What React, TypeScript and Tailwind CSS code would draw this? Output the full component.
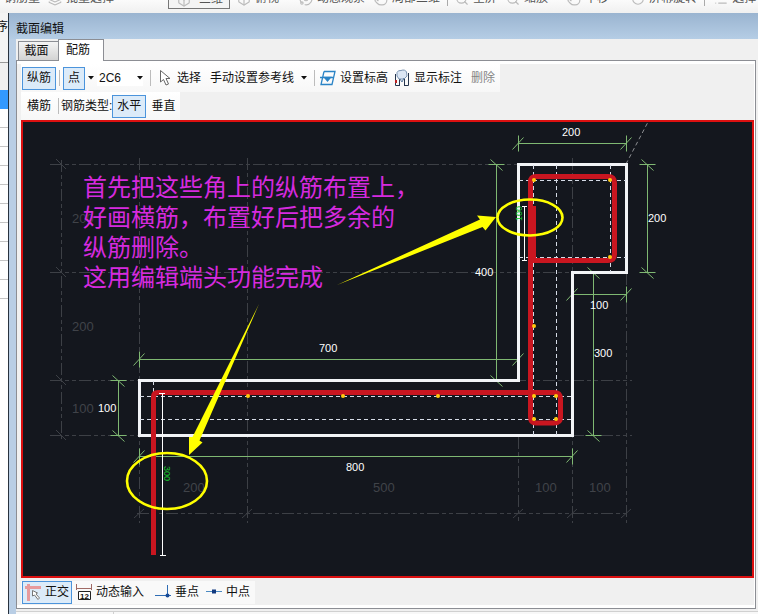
import { useState } from 'react';
import { Hand, Orbit, RotateCw, Search, Box, List, Layers } from 'lucide-react';

const topItems = [
  { text: '批量选择', icon: Layers, cls: 'ml-2' },
  { text: '俯视', icon: Box, cls: 'ml-[7px]', combo: true },
  { text: '动态观察', icon: Orbit, cls: 'ml-5' },
  { text: '局部三维', icon: Hand, cls: 'ml-[9px]' },
  { text: '全屏', icon: Search, cls: 'ml-[7px]', sep: true },
  { text: '缩放', icon: Search, cls: 'ml-[9px]' },
  { text: '平移', icon: Hand, cls: 'ml-[19px]' },
  { text: '屏幕旋转', icon: RotateCw, cls: 'ml-[22px]' },
  { text: '选择', icon: List, cls: 'ml-[9px]', sep: true },
];

const points = [
  [248, 396], [343, 396], [438, 396], [534, 326], [534, 180], [610, 180],
  [610, 257], [534, 396], [556, 396], [534, 419], [556, 419],
];

// [x1, x2, y]
const hDims = [[518.5, 626.5, 143.5], [572.5, 626.5, 294.5], [139.5, 518.5, 359.5], [139.5, 572.5, 456.5]];
// [x, y1, y2]
const vDims = [[496.5, 164.5, 380.5], [647.5, 164.5, 272.5], [593.5, 272.5, 435.5], [118.5, 380.5, 435.5]];

const labels: [number, number, string][] = [
  [562, 136, '200'], [648, 222, '200'], [475, 276, '400'], [590, 309, '100'],
  [594, 357, '300'], [319, 352, '700'], [346, 471, '800'], [98, 412, '100'],
];

const gridLabels: [number, number, string][] = [
  [72, 223, '200'], [72, 331, '200'], [72, 413, '100'], [183, 492, '200'],
  [373, 492, '500'], [535, 492, '100'], [589, 492, '100'],
];

const notes = ['首先把这些角上的纵筋布置上，', '好画横筋，布置好后把多余的', '纵筋删除。', '这用编辑端头功能完成'];

function Sep({ className = '' }) {
  return <span className={`h-4 w-px shrink-0 bg-[#bcbcbc] ${className}`} />;
}

function Caret() {
  return (
    <svg className="shrink-0" width="6" height="4" viewBox="0 0 6 4"><path d="M0 0h6L3 3.5z" fill="#111" /></svg>
  );
}

function ToolButton({ text, active = false, disabled = false, onClick, className = '', children }: any) {
  const state = active ? 'border-[#4b94dc] bg-[#dcebf9]' : 'border-transparent';
  return (
    <button
      disabled={disabled}
      onClick={onClick}
      className={`flex h-[23px] shrink-0 items-center gap-1 border whitespace-nowrap ${state} ${disabled ? 'text-[#858585]' : ''} ${className}`}
    >
      {children}
      {text}
    </button>
  );
}

function HDim({ x1, x2, y }: any) {
  return (
    <g>
      <path d={`M${x1} ${y}H${x2}`} />
      {[x1, x2].map(x => <path key={x} d={`M${x} ${y - 8}v16M${x - 6} ${y + 6}l11 -12`} />)}
    </g>
  );
}

function VDim({ x, y1, y2 }: any) {
  return (
    <g>
      <path d={`M${x} ${y1}V${y2}`} />
      {[y1, y2].map(y => <path key={y} d={`M${x - 8} ${y}h16M${x - 6} ${y - 5}l12 11`} />)}
    </g>
  );
}

function Drawing() {
  return (
    <svg className="block w-full" viewBox="23 122 729 454" fill="none">
      <g stroke="#3d4046" strokeDasharray="12 3 4 3 4 3">
        <path d="M50 164.5H518M50 272.5H572M50 380.5H632M50 435.5H632M137 513.5H628" />
        <path d="M61.5 160V439M139.5 158V523M247.5 158V523M518.5 437V523M572.5 158V523M626.5 273V523" />
      </g>
      <g stroke="#3d4046">
        {[164, 272, 380, 435].map(y => <path key={y} d={`M56 ${y - 5}l10 10M51 ${y + 0.5}h10`} />)}
        {[139, 247, 518, 572, 626].map(x => <path key={x} d={`M${x - 5} 518l10 -9`} />)}
      </g>
      <path d="M626 164L648 122" stroke="#8b8d91" strokeDasharray="4 3" />
      <g fill="#404349" className="font-[Liberation_Sans] text-[13px]">
        {gridLabels.map(([x, y, t]) => <text key={`${x}-${y}`} x={x} y={y}>{t}</text>)}
      </g>

      <g stroke="#7fb872">
        {hDims.map(([x1, x2, y]) => <HDim key={y} x1={x1} x2={x2} y={y} />)}
        {vDims.map(([x, y1, y2]) => <VDim key={x} x={x} y1={y1} y2={y2} />)}
      </g>

      <path d="M518.5 164.5H626.5V272.5H572.5V435.5H139.5V380.5H518.5Z" stroke="#f2f4f7" strokeWidth="3" />
      <path
        d="M140 396.5H572M140 419.5H572M519 180.5H626M519 257.5H626M153.5 381V396M533.5 165V435M556.5 165V435M610.5 165V272"
        stroke="#d5dbe6"
        strokeDasharray="4 3"
      />

      <g stroke="#c91620" strokeWidth="5">
        <path d="M153.5 555V397Q153.5 392.5 158 392.5H554Q560.5 392.5 560.5 399V417Q560.5 423 554 423H536Q530.5 423 530.5 417V182Q530.5 176.5 536 176.5H608Q614.5 176.5 614.5 183V254Q614.5 260.5 608 260.5H533" />
        <path d="M533.5 206V262" />
      </g>
      {points.map(([x, y]) => <circle key={`${x}-${y}`} cx={x} cy={y} r="2" fill="#ffc90e" />)}

      <path d="M162.5 393V555M159 393.5h6M160 555.5h6M524.5 206V260M522 206.5h5M522 260.5h5" stroke="#fff" />
      <g fill="#16c82c" className="font-[Liberation_Sans] text-[9px]">
        <text transform="translate(164 466) rotate(90)">300</text>
        <text transform="translate(522 221) rotate(-90)">100</text>
      </g>
      <g fill="#fff" className="font-[Liberation_Sans] text-[11px]">
        {labels.map(([x, y, t]) => <text key={`${x}-${y}`} x={x} y={y}>{t}</text>)}
      </g>

      <g stroke="#ffff00" strokeWidth="2.6">
        <ellipse cx="167" cy="481" rx="40" ry="28" />
        <ellipse cx="530" cy="217.5" rx="32.5" ry="18" />
      </g>
      <g fill="#ffff00">
        <path d="M337 285L480 219.5L477 215.5L496 217L485.5 230.5L482.5 227Z" />
        <path d="M259 304L192.5 437H189V455L202.5 442.5L199.5 440.5Z" />
      </g>
      <path d="M309 214l1-2 2 3z" fill="#d8a640" />
      <g fill="#d62adf" className="font-['Noto_Sans_CJK_SC',sans-serif] text-[24px] font-normal">
        {notes.map((t, i) => <text key={t} x="83" y={196 + i * 30}>{t}</text>)}
      </g>
    </svg>
  );
}

export default function App() {
  const [tab, setTab] = useState('配筋');
  const [bar, setBar] = useState('纵筋');
  const [dir, setDir] = useState('水平');
  const [ortho, setOrtho] = useState(true);

  return (
    <div className="flex min-h-screen flex-col overflow-hidden bg-[#f0f0f0] font-['Liberation_Sans','Noto_Sans_CJK_SC',sans-serif] text-xs text-[#111]">
      <header className="flex h-[13px] items-start overflow-hidden bg-linear-to-b from-[#fbfbfb] to-[#f0f0f0] text-[#555]">
        <button className="-mt-2 ml-1 shrink-0 leading-3">钢筋量</button>
        {topItems.map(({ text, icon: Icon, cls, combo, sep }) => (
          <div key={text + cls} className="contents">
            {combo && (
              <button className="-mt-3 ml-[54px] flex h-[21px] w-[62px] shrink-0 items-start gap-2 border border-[#777] bg-[#f4f4f4] pt-1 pl-2 leading-3">
                <Box size={14} className="text-[#bbb]" />三维
              </button>
            )}
            {sep && <span className="ml-[7px] h-1.5 w-px shrink-0 bg-[#aaa]" />}
            <button className={`-mt-2 flex shrink-0 items-start gap-1 leading-3 whitespace-nowrap ${cls}`}>
              <Icon size={14} className="text-[#bbb]" />{text}
            </button>
          </div>
        ))}
      </header>

      <div className="flex flex-1">
        <aside className="w-2 shrink-0 overflow-hidden bg-white">
          <div className="flex h-[49px] justify-end bg-[#f4f4f4] pt-1 leading-5">序</div>
          <div className="h-[28px] border-t border-[#999] bg-[#f0f0f0]" />
          <div className="h-[19px] bg-[#3399ff]" />
          {Array.from({ length: 10 }, (_, i) => <div key={i} className="h-[19px] border-b border-[#c4c4c4]" />)}
        </aside>

        <section className="flex min-w-0 flex-1 flex-col border-l border-[#28323e] bg-[#b9cee5] pl-[7px]">
          <h1 className="-ml-[7px] h-[26px] bg-linear-to-b from-[#9ab4d0] to-[#b5cde5] pt-1.5 pl-[7px] leading-5">截面编辑</h1>
          <div className="flex flex-1 flex-col bg-[#f0f0f0]">
            <div className="z-10 flex h-[22px] items-end pl-0.5" role="tablist">
              {['截面', '配筋'].map(t => (
                <button
                  key={t}
                  role="tab"
                  aria-selected={tab === t}
                  onClick={() => setTab(t)}
                  className={tab === t
                    ? 'h-[22px] w-[46px] border border-b-0 border-[#8c8e94] bg-white pr-1.5 pb-0.5'
                    : 'h-5 w-10 border border-r-0 border-[#8c8e94] bg-linear-to-b from-[#f4f4f4] to-[#d3d3d3] pr-1'}
                >
                  {t}
                </button>
              ))}
            </div>

            <main className="-mt-px mr-0.5 border border-[#8c8e94] bg-white pt-[3px] pr-px pb-[3px]">
              <div className="bg-[#f0f0f0] pl-1">
                <div className="flex">
                  <div className="flex h-[28px] items-center bg-linear-to-b from-white to-[#f7f7f7] pr-1 pl-px">
                    <ToolButton text="纵筋" active={bar === '纵筋'} onClick={() => setBar('纵筋')} className="px-1" />
                    <Sep className="mx-[3px]" />
                    <ToolButton text="点" active className="px-1" />
                    <button aria-label="点选项" className="px-[3px]"><Caret /></button>
                    <label className="flex items-center bg-white">
                      <select aria-label="钢筋规格" className="w-10 appearance-none bg-white pl-0.5"><option>2C6</option></select>
                      <Caret />
                    </label>
                    <Sep className="mx-[7px]" />
                    <ToolButton text="选择">
                      <svg width="14" height="18" viewBox="0 0 14 18">
                        <path d="M1.5 1.5V13L4.5 10.5L7 16L9.5 15L7 9.5H11Z" fill="#fff" stroke="#666" />
                      </svg>
                    </ToolButton>
                    <ToolButton text="手动设置参考线" className="ml-[7px]" />
                    <button aria-label="参考线选项" className="px-1.5"><Caret /></button>
                    <Sep className="mr-1 ml-px" />
                    <ToolButton text="设置标高">
                      <svg width="16" height="16" viewBox="0 0 16 16" fill="none" stroke="#2b84c6" strokeWidth="1.3">
                        <path d="M4 1.5H15L12 14.5H1L4 1.5M0 7.5H14" />
                        <path d="M4.5 7.5H10.5L7.5 11Z" fill="#2b84c6" />
                      </svg>
                    </ToolButton>
                    <ToolButton text="显示标注" className="ml-1">
                      <svg width="16" height="18" viewBox="0 0 16 18" fill="none">
                        <path d="M1.5 5V16.5H6M14.5 4V16.5H10M5.5 9V17M10.5 9V17" stroke="#26364e" />
                        <path d="M3 3.5Q4 1 7 1.5Q11 0 12.5 3L13 7L10 10H5L3 7Z" fill="#dbe6f4" stroke="#7c95b3" />
                        <path d="M6 10L8 13L10 9" stroke="#55779d" />
                        <path d="M1 11h2v3H1z" fill="#b22" />
                      </svg>
                    </ToolButton>
                    <ToolButton text="删除" disabled className="ml-[7px]" />
                  </div>
                </div>
                <div className="flex">
                  <div className="flex h-[28px] items-center bg-linear-to-b from-white to-[#f7f7f7] pl-px">
                    <ToolButton text="横筋" active={bar === '横筋'} onClick={() => setBar('横筋')} className="px-1" />
                    <Sep className="mx-[2px]" />
                    <span>钢筋类型:</span>
                    {['水平', '垂直'].map(t => (
                      <ToolButton key={t} text={t} active={dir === t} onClick={() => setDir(t)} className="px-1" />
                    ))}
                  </div>
                </div>

                <div className="border-2 border-[#dc1010] bg-[#14171e]">
                  <Drawing />
                </div>

                <div className="flex h-[27px] items-center pt-px">
                  <div className="flex items-center bg-[#f9f9f9] pr-1 pl-px">
                    <ToolButton text="正交" active={ortho} onClick={() => setOrtho(!ortho)} className="px-0.5">
                      <svg width="16" height="17" viewBox="0 0 16 17" fill="none">
                        <path d="M0 3.5H16M3.5 0V17" stroke="#e79a9d" strokeWidth="3" />
                        <path d="M7.500 6.500V12L9.500 11L13 15.500L14.500 14L11 10L12.500 9Z" fill="#fff" stroke="#777" />
                      </svg>
                    </ToolButton>
                    <ToolButton text="动态输入" className="ml-[3px]">
                      <svg width="16" height="17" viewBox="0 0 16 17" fill="none">
                        <path d="M.5 0V6M15.500 0V6M0 4.500H16" stroke="#a06a65" />
                        <path d="M2.500 7.500H14.500V15.500H2.500Z" fill="#fff" stroke="#222" />
                        <text x="4" y="15" fill="#111" className="font-[Liberation_Sans] text-[8px] font-bold">12</text>
                      </svg>
                    </ToolButton>
                    <ToolButton text="垂点" className="ml-[9px]">
                      <svg width="16" height="16" viewBox="0 0 16 16">
                        <path d="M0 11.500H16M12.500 1V11" stroke="#2f6db4" />
                        <circle cx="12.5" cy="11.500" r="2" fill="#174a96" />
                      </svg>
                    </ToolButton>
                    <ToolButton text="中点" className="ml-[5px]">
                      <svg width="16" height="16" viewBox="0 0 16 16">
                        <path d="M0 7.500H16" stroke="#4c8ac2" />
                        <path d="M6 5.500h4v4H6z" fill="#123a80" />
                      </svg>
                    </ToolButton>
                  </div>
                </div>
              </div>
            </main>
            <footer className="mt-0.5 flex flex-1 border-t border-[#d0d0d0] bg-[#f8f8f8]">
              <span className="w-[98px] border-r border-[#d0d0d0]" />
            </footer>
          </div>
        </section>
      </div>
    </div>
  );
}
